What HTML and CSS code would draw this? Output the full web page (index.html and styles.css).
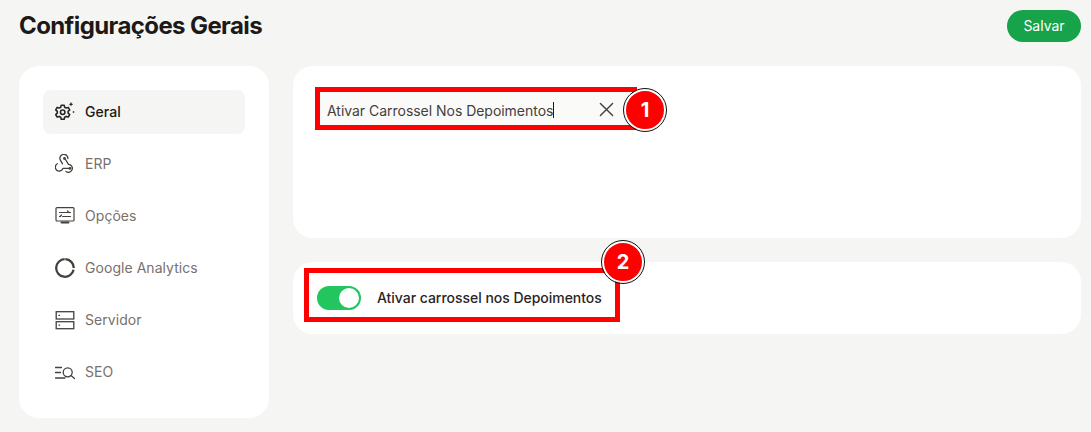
FILE: index.html
```html
<!DOCTYPE html>
<html lang="pt-BR">
<head>
  <meta charset="UTF-8" />
  <meta name="viewport" content="width=device-width, initial-scale=1.0"/>
  <title>Configurações Gerais</title>
  <link rel="stylesheet" href="styles.css">
</head>
<body>
  <div class="header">
    <h1>Configurações Gerais</h1>
    <button class="save">Salvar</button>
  </div>

  <div class="layout">
    <div class="sidebar">
      <a class="nav-item active">
        <svg viewBox="0 0 20 20" class="icon" fill="none" stroke="currentColor" stroke-linejoin="round">
          <g transform="translate(7.7 10.3) scale(1.32)" stroke-width="1.200">
            <path d="M-1.1-5.4h2.2l.4 1.6 1.100.6 1.600-.5 1.100 1.900-1.200 1.100v1.300l1.200 1.100-1.100 1.900-1.600-.5-1.100.6-.4 1.600h-2.200l-.4-1.600-1.100-.6-1.600.5-1.100-1.900 1.200-1.100v-1.300l-1.200-1.100 1.100-1.900 1.600.5 1.100-.6z"/>
            <circle r="1.700"/>
          </g>
          <path d="M16 0l.7 1.600 1.600.7-1.600.7-.7 1.600-.7-1.600-1.600-.7 1.600-.7z" fill="currentColor" stroke="none"/>
          <path d="M18.500 8.700l.4.9.9.4-.9.4-.4.9-.4-.9-.9-.4.9-.4z" fill="currentColor" stroke="none"/>
        </svg>
        <span class="label">Geral</span>
      </a>
      <a class="nav-item">
        <svg viewBox="0 0 20 20" class="icon" fill="none" stroke="currentColor" stroke-width="1.300" stroke-linecap="round" stroke-linejoin="round">
          <path d="M7.500 9.800 5.500 6.400a4 4 0 1 1 7.400-1.900"/>
          <path d="M10.500 5.500l3 4.800a4 4 0 1 1-2.500 7.200"/>
          <path d="M14 14.400H7.900a3.900 3.900 0 1 1-5.600-4.600"/>
          <circle cx="9.500" cy="4.500" r=".8"/>
          <circle cx="15" cy="14.400" r=".8"/>
        </svg>
        <span class="label">ERP</span>
      </a>
      <a class="nav-item">
        <svg viewBox="0 0 20 20" class="icon" fill="none" stroke="currentColor" stroke-width="1.200" stroke-linecap="round">
          <rect x="1" y="1.600" width="18" height="13.400" rx="1"/>
          <path d="M4.500 6.500h8M14.500 6.500h1M12.500 5l1.500 1.500M4.500 10.500h1M7.500 10.500h8M6.500 9 5 10.500"/>
          <path d="M6.500 16.600h7" stroke-width="2"/>
        </svg>
        <span class="label">Opções</span>
      </a>
      <a class="nav-item">
        <svg viewBox="0 0 20 20" class="icon" fill="none" stroke="currentColor" stroke-width="2.300">
          <path d="M10.300 1.200a8.800 8.800 0 0 1 8.500 8.800M18.600 11.800A8.800 8.800 0 1 1 9.700 1.200"/>
        </svg>
        <span class="label">Google Analytics</span>
      </a>
      <a class="nav-item">
        <svg viewBox="0 0 20 20" class="icon" fill="none" stroke="currentColor" stroke-width="1.300">
          <rect x="1.200" y="1.700" width="17.600" height="7.300"/>
          <rect x="1.200" y="11.700" width="17.600" height="7"/>
          <path d="M3.500 5.300h1.600M3.500 15.200h1.600"/>
        </svg>
        <span class="label">Servidor</span>
      </a>
      <a class="nav-item">
        <svg viewBox="0 0 20 20" class="icon" fill="none" stroke="currentColor" stroke-width="1.300" stroke-linecap="round">
          <path d="M.5 5.500h6M.5 10.500h5M.5 16h9.500"/>
          <circle cx="12.700" cy="10.300" r="4.500"/>
          <path d="M16 13.500l3.500 3"/>
        </svg>
        <span class="label">SEO</span>
      </a>
    </div>

    <div class="main">
      <div class="card card-search">
        <div class="search-field">
          <span class="search-text">Ativar Carrossel Nos Depoimentos</span><span class="caret"></span>
          <svg viewBox="0 0 16 16" class="clear" fill="none" stroke="currentColor" stroke-width="1.500" stroke-linecap="round">
            <path d="M1.500 1.500l13 13M14.500 1.500l-13 13"/>
          </svg>
        </div>
        <div class="mark mark-one"></div>
        <div class="badge badge-one">1</div>
      </div>

      <div class="card card-toggle">
        <span class="toggle"><span class="knob"></span></span>
        <span class="toggle-label">Ativar carrossel nos Depoimentos</span>
        <div class="mark mark-two"></div>
        <div class="badge badge-two">2</div>
      </div>
    </div>
  </div>
</body>
</html>
```

FILE: styles.css
```css
* {
  box-sizing: border-box;
}

html, body {
  height: 100%;
}

body {
  margin: 0;
  padding: 10px 10px 14px 19px;
  font-family: Inter, 'Noto Sans', sans-serif;
  background-color: #f5f5f4;
  color: #1c1917;
  overflow: hidden;
}

.header {
  display: flex;
  justify-content: space-between;
  align-items: center;
  height: 32px;
  margin-bottom: 24px;
}

h1 {
  margin: 0 0 2px;
  font-size: 24px;
  font-weight: 700;
  letter-spacing: -0.6px;
}

.save {
  width: 74px;
  height: 32px;
  padding: 0 0 2px;
  border: none;
  border-radius: 16px;
  background-color: #16a34a;
  color: #fff;
  font-family: inherit;
  font-size: 14px;
}

.layout {
  display: flex;
  gap: 24px;
  align-items: flex-start;
}

.sidebar {
  width: 250px;
  height: 352px;
  padding: 24px;
  background-color: #fff;
  border-radius: 20px;
  display: flex;
  flex-direction: column;
  gap: 8px;
}

.nav-item {
  display: flex;
  align-items: center;
  gap: 10px;
  height: 44px;
  padding: 0 12px;
  border-radius: 8px;
  font-size: 14px;
  font-weight: 400;
  letter-spacing: 0.05px;
  color: #78716c;
}

.nav-item .icon {
  width: 20px;
  height: 20px;
  color: #44403c;
  flex-shrink: 0;
}

.nav-item .label {
  margin-bottom: 2px;
}

.nav-item.active {
  background-color: #f5f5f4;
  color: #1c1917;
  font-weight: 500;
}

.nav-item.active .icon {
  color: #292524;
}

.main {
  flex: 1;
  display: flex;
  flex-direction: column;
  gap: 24px;
}

.card {
  position: relative;
  background-color: #fff;
  border-radius: 20px;
}

.card-search {
  height: 172px;
  padding: 26px 27px;
}

.search-field {
  display: flex;
  align-items: center;
  width: 315px;
  height: 33px;
  padding: 3px 7px 0;
  background-color: #fafaf9;
  font-size: 14px;
  letter-spacing: -0.03px;
  color: #44403c;
}

.caret {
  width: 1px;
  height: 16px;
  background-color: #1c1917;
}

.clear {
  width: 15px;
  height: 15px;
  margin-left: auto;
  margin-right: 14px;
  margin-top: -1px;
  color: #44403c;
}

.card-toggle {
  height: 72px;
  padding: 0 24px;
  display: flex;
  align-items: center;
  gap: 16px;
}

.toggle {
  width: 44px;
  height: 24px;
  padding: 2px;
  border-radius: 12px;
  background-color: #22c55e;
  display: flex;
  justify-content: flex-end;
}

.knob {
  width: 20px;
  height: 20px;
  border-radius: 50%;
  background-color: #fff;
}

.toggle-label {
  margin-bottom: 2px;
  font-size: 14px;
  font-weight: 500;
  letter-spacing: -0.03px;
  color: #292524;
}

/* anotacoes em cima do print */
.mark {
  position: absolute;
  border: 5px solid #f00;
}

.mark-one {
  left: 22px;
  top: 21px;
  width: 322px;
  height: 43px;
}

.mark-two {
  left: 11px;
  top: 6px;
  width: 316px;
  height: 54px;
}

.badge {
  position: absolute;
  width: 42px;
  height: 42px;
  border-radius: 50%;
  background-color: #f00;
  border: 2px solid #fff;
  outline: 1px solid #111;
  outline-offset: 0;
  color: #fff;
  font-size: 20px;
  font-weight: 700;
  display: flex;
  align-items: center;
  justify-content: center;
}

.badge-one {
  left: 331px;
  top: 23px;
}

.badge-two {
  left: 309px;
  top: -21px;
}
```
